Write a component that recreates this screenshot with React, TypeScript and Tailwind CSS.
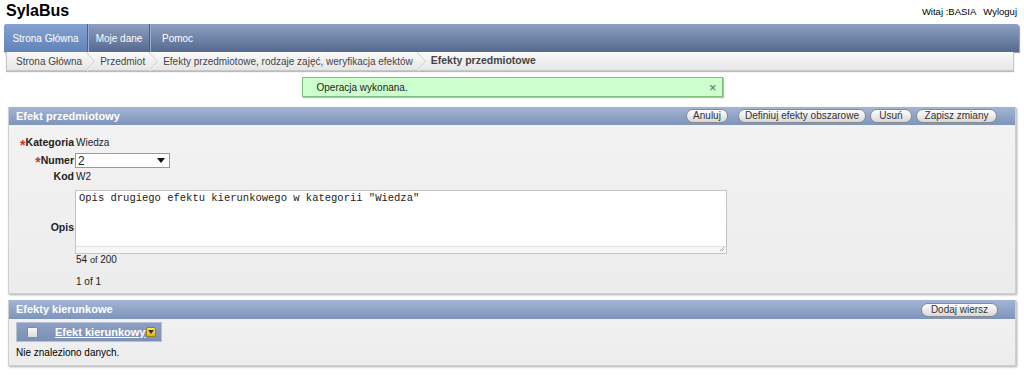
import React from "react";

const Chevron = () => (
  <svg width="12" height="19" viewBox="0 0 12 19" className="mx-[3px]">
    <path d="M1 0 L10 9.5 L1 19" fill="none" stroke="#d4d4d4" strokeWidth="1.2" />
    <path d="M2 0 L11 9.5 L2 19" fill="none" stroke="#ffffff" strokeWidth="0.8" />
  </svg>
);

const Btn = ({ children, className = "" }: { children: React.ReactNode; className?: string }) => (
  <button
    className={`flex h-[14px] items-center justify-center rounded-full border border-[#8a8a8a] bg-gradient-to-b from-[#ffffff] to-[#d8d8d8] text-[10px] leading-[12px] text-[#333] shadow-[inset_0_1px_0_#fff] ${className}`}
  >
    {children}
  </button>
);

export default function App() {
  const sans = { fontFamily: "'Liberation Sans', Arial, sans-serif" };
  return (
    <div className="w-[1024px] h-[382px] bg-white text-[#222] overflow-hidden" style={sans}>
      {/* top */}
      <div className="flex h-[24px] items-start justify-between">
        <div className="ml-[6px] mt-[1px] text-[16px] font-bold leading-[20px] text-black">SylaBus</div>
        <div className="mr-[7px] mt-[6px] flex gap-[7px] text-[9.5px] leading-[12px] text-black">
          <span>Witaj :BASIA</span>
          <span>Wyloguj</span>
        </div>
      </div>
      {/* nav */}
      <div className="ml-[4px] mr-[5px] flex h-[28px] rounded-t-[3px] bg-gradient-to-b from-[#8d9fc2] to-[#566a90] text-[10px] text-white shadow-[1px_1px_1px_#999]">
        <div className="flex w-[84px] items-center justify-center rounded-tl-[3px] bg-gradient-to-b from-[#84a2d2] to-[#6283b8] border-r border-[#4d5f85]">
          Strona Główna
        </div>
        <div className="flex w-[62px] items-center justify-center border-r border-[#4d5f85] border-l border-l-[#9aabcb]">Moje dane</div>
        <div className="flex items-center px-[11px] border-l border-l-[#9aabcb]">Pomoc</div>
      </div>
      {/* breadcrumb */}
      <div className="ml-[6px] mr-[10px] flex h-[19px] items-center bg-gradient-to-b from-[#fafafa] to-[#e6e6e6] border-b border-x border-[#c8c8c8] pl-[9px] text-[10px] text-[#444] shadow-[0_1px_1px_#bbb]">
        <span>Strona Główna</span>
        <Chevron />
        <span>Przedmiot</span>
        <Chevron />
        <span>Efekty przedmiotowe, rodzaje zajęć, weryfikacja efektów</span>
        <Chevron />
        <span className="text-[10.5px] font-bold">Efekty przedmiotowe</span>
      </div>
      {/* message */}
      <div className="mt-[6px] flex justify-center">
        <div className="flex h-[20px] w-[421px] items-center justify-between border border-[#7fbf7f] bg-[#ccffcc] pl-[14px] pr-[5px] text-[10px] text-[#222] shadow-[1px_1px_1px_#bbb]">
          <span>Operacja wykonana.</span>
          <span className="text-[13px] leading-none text-[#666]">×</span>
        </div>
      </div>
      {/* panel 1 */}
      <div className="mx-[8px] mt-[10px] w-[1008px] border-b border-x border-[#cfcfcf] bg-gradient-to-b from-[#f3f3f3] to-[#ececec] shadow-[1px_1px_2px_#aaa]">
        <div className="flex h-[18px] items-center justify-between bg-gradient-to-b from-[#a3b5d5] to-[#7e94ba] pl-[7px] pr-[18px]">
          <span className="text-[11px] font-bold text-white">Efekt przedmiotowy</span>
          <div className="flex gap-[4px]">
            <Btn className="mr-[6px] w-[42px]">Anuluj</Btn>
            <Btn className="w-[128px]">Definiuj efekty obszarowe</Btn>
            <Btn className="w-[42px]">Usuń</Btn>
            <Btn className="w-[81px]">Zapisz zmiany</Btn>
          </div>
        </div>
        <div className="pb-[5px] pt-[11px] text-[10px]">
          <div className="grid grid-cols-[65px_1fr] items-center gap-x-[2px]">
            <div className="flex h-[14px] items-center justify-end text-[10.5px] font-bold">
              <span className="text-[#cc3333] text-[14px] leading-none mt-[3px]">*</span>Kategoria
            </div>
            <div className="h-[14px] leading-[14px]">Wiedza</div>

            <div className="mt-[3px] flex h-[15px] items-center justify-end text-[10.5px] font-bold">
              <span className="text-[#cc3333] text-[14px] leading-none mt-[3px]">*</span>Numer
            </div>
            <div className="mt-[3px]">
              <div className="-ml-[1px] flex h-[15px] w-[95px] items-center justify-between border border-[#999] bg-white pl-[2px] pr-[4px] text-[12px]">
                <span>2</span>
                <svg width="8" height="5" viewBox="0 0 8 5"><path d="M0 0 L8 0 L4 5 Z" fill="#111" /></svg>
              </div>
            </div>

            <div className="mt-[2px] flex h-[14px] items-center justify-end text-[10.5px] font-bold">Kod</div>
            <div className="mt-[2px] h-[14px] leading-[14px]">W2</div>

            <div className="mt-[6px] flex h-[64px] items-center justify-end pt-[12px] text-[10.5px] font-bold">Opis</div>
            <div className="mt-[6px]">
              <div className="-ml-[1px] relative h-[64px] w-[652px] border border-[#c4c4c4] bg-white px-[3px] pt-[1px] text-[10.5px] leading-[13px]" style={{ fontFamily: "'Liberation Mono', 'Courier New', monospace" }}>
                Opis drugiego efektu kierunkowego w kategorii "Wiedza"
                <div className="absolute bottom-0 left-0 right-0 h-[7px] border-t border-[#e2e2e2] bg-[#f6f6f6]" />
                <svg className="absolute bottom-[1px] right-[1px]" width="6" height="6" viewBox="0 0 6 6">
                  <path d="M5 1 L1 5 M5 3 L3 5" stroke="#999" strokeWidth="0.8" />
                </svg>
              </div>
            </div>

            <div />
            <div className="mt-[-1px] h-[13px] text-[10px] leading-[13px]">
              54 <span className="text-[9px]">of</span> 200
            </div>

            <div />
            <div className="mt-[9px] h-[13px] text-[10px] leading-[13px]">1 of 1</div>
          </div>
        </div>
      </div>
      {/* panel 2 */}
      <div className="mx-[8px] mt-[6px] w-[1008px] border-b border-x border-[#cfcfcf] bg-gradient-to-b from-[#f3f3f3] to-[#ececec] shadow-[1px_1px_2px_#aaa]">
        <div className="flex h-[19px] items-center justify-between bg-gradient-to-b from-[#a3b5d5] to-[#7e94ba] pl-[7px] pr-[17px]">
          <span className="text-[11px] font-bold text-white">Efekty kierunkowe</span>
          <Btn className="w-[77px]">Dodaj wiersz</Btn>
        </div>
        <div className="px-[7px] pb-[6px] pt-[3px]">
          <div className="flex h-[20px] w-[146px] items-center border border-[#b6c1d6] bg-gradient-to-b from-[#8da0c2] to-[#7b90b5]">
            <div className="ml-[10px] h-[11px] w-[11px] shrink-0 border border-[#8c8c8c] bg-gradient-to-b from-[#f8f8f8] to-[#dcdcdc]" />
            <span className="ml-[17px] whitespace-nowrap text-[11px] font-bold text-white underline">Efekt kierunkowy</span>
            <div className="ml-[1px] flex h-[10px] w-[10px] shrink-0 items-center justify-center rounded-[2px] border border-[#a08000] bg-gradient-to-b from-[#ffe566] to-[#e0b000]">
              <svg width="6" height="4" viewBox="0 0 6 4"><path d="M0 0 L6 0 L3 4 Z" fill="#333" /></svg>
            </div>
          </div>
          <div className="mt-[5px] text-[10px] leading-[12px] text-black">Nie znaleziono danych.</div>
        </div>
      </div>
    </div>
  );
}
